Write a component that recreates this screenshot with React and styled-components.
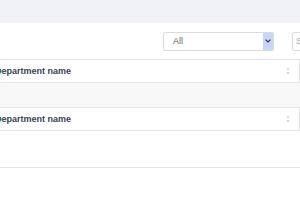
import React from "react";
import styled, { createGlobalStyle } from "styled-components";

const Global = createGlobalStyle`
  html, body { margin: 0; padding: 0; }
  body {
    background: #f1f2f5;
    font-family: "Liberation Sans", Arial, sans-serif;
    width: 300px;
    height: 200px;
    overflow: hidden;
  }
`;

const Page = styled.div`
  width: 300px;
  height: 200px;
  overflow: hidden;
  display: flex;
  flex-direction: column;
`;

const TopBar = styled.div`
  height: 23px;
  flex: none;
  background: #f1f2f5;
`;

const Panel = styled.div`
  flex: 1;
  background: #ffffff;
  display: flex;
  flex-direction: column;
  margin-left: -20px;
  width: 320px;
`;

const Toolbar = styled.div`
  height: 36px;
  display: flex;
  align-items: center;
  padding-left: 183px;
  gap: 18px;
  box-sizing: border-box;
`;

const Select = styled.div`
  flex: none;
  width: 111px;
  height: 19px;
  box-sizing: border-box;
  border: 1px solid #dcdcdf;
  border-radius: 2px;
  display: flex;
  align-items: center;
  font-size: 9px;
  color: #666;
  background: #fff;
  overflow: hidden;
`;

const SelectText = styled.span`
  flex: 1;
  padding-left: 9px;
`;

const ArrowBtn = styled.span`
  width: 10px;
  height: 100%;
  background: #c6d6f7;
  display: flex;
  align-items: center;
  justify-content: center;
`;

const SearchBox = styled.div`
  flex: none;
  width: 60px;
  height: 19px;
  box-sizing: border-box;
  border: 1px solid #dcdcdf;
  border-radius: 2px;
  font-size: 9px;
  color: #aaa;
  display: flex;
  align-items: center;
  padding-left: 3px;
`;

const HeaderRow = styled.div`
  height: 24px;
  box-sizing: border-box;
  border-top: 1px solid #e6e6e8;
  border-bottom: 1px solid #e6e6e8;
  border-right: 1px solid #e6e6e8;
  width: 320px;
  display: flex;
  align-items: center;
  justify-content: space-between;
  padding-left: 15px;
  padding-right: 9px;
  font-size: 9px;
  font-weight: bold;
  color: #3b4252;
  background: #fff;
`;

const Body = styled.div`
  height: ${(p) => p.h}px;
  background: ${(p) => p.bg};
  box-sizing: border-box;
  border-bottom: ${(p) => (p.line ? "1px solid #e6e6e8" : "none")};
`;

const SortIcon = () => (
  <svg width="4" height="8" viewBox="0 0 4 8">
    <path d="M2 0.5 L3.6 3 H0.4 Z" fill="#d0d0d4" />
    <path d="M2 7.5 L3.6 5 H0.4 Z" fill="#d0d0d4" />
  </svg>
);

const Chevron = () => (
  <svg width="6" height="4" viewBox="0 0 6 4">
    <path d="M0.6 0.6 L3 3 L5.4 0.6" stroke="#2f3a4a" strokeWidth="1.2" fill="none" />
  </svg>
);

export default function App() {
  return (
    <Page>
      <Global />
      <TopBar />
      <Panel>
        <Toolbar>
          <Select>
            <SelectText>All</SelectText>
            <ArrowBtn>
              <Chevron />
            </ArrowBtn>
          </Select>
          <SearchBox>S</SearchBox>
        </Toolbar>
        <HeaderRow>
          <span>Department name</span>
          <SortIcon />
        </HeaderRow>
        <Body h={24} bg="#f8f8f9" />
        <HeaderRow>
          <span>Department name</span>
          <SortIcon />
        </HeaderRow>
        <Body h={37} bg="#ffffff" line />
      </Panel>
    </Page>
  );
}
